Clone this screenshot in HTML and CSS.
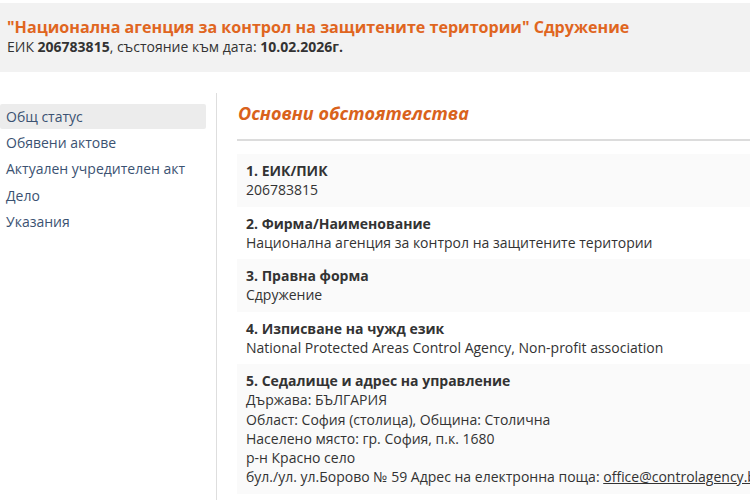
FILE: index.html
```html
<!DOCTYPE html>
<html lang="bg">
<head>
<meta charset="utf-8">
<link rel="stylesheet" href="styles.css">
</head>
<body>
<div class="page">
  <header class="head">
    <h1 class="title">"Национална агенция за контрол на защитените територии" Сдружение</h1>
    <div class="sub">ЕИК <b>206783815</b>, състояние към дата: <b>10.02.2026г.</b></div>
  </header>
  <div class="main">
    <nav class="nav">
      <a class="nav-item active">Общ статус</a>
      <a class="nav-item">Обявени актове</a>
      <a class="nav-item">Актуален учредителен акт</a>
      <a class="nav-item">Дело</a>
      <a class="nav-item">Указания</a>
    </nav>
    <section class="content">
      <h2 class="heading">Основни обстоятелства</h2>
      <div class="rule"></div>
      <div class="field alt">
        <div class="label">1. ЕИК/ПИК</div>
        <div class="value">206783815</div>
      </div>
      <div class="field">
        <div class="label">2. Фирма/Наименование</div>
        <div class="value">Национална агенция за контрол на защитените територии</div>
      </div>
      <div class="field alt">
        <div class="label">3. Правна форма</div>
        <div class="value">Сдружение</div>
      </div>
      <div class="field">
        <div class="label">4. Изписване на чужд език</div>
        <div class="value">National Protected Areas Control Agency, Non-profit association</div>
      </div>
      <div class="field alt">
        <div class="label">5. Седалище и адрес на управление</div>
        <div class="value">Държава: БЪЛГАРИЯ</div>
        <div class="value">Област: София (столица), Община: Столична</div>
        <div class="value">Населено място: гр. София, п.к. 1680</div>
        <div class="value">р-н Красно село</div>
        <div class="value">бул./ул. ул.Борово № 59 Адрес на електронна поща: <a class="mail">office@controlagency.bg</a></div>
      </div>
    </section>
  </div>
</div>
</body>
</html>
```

FILE: styles.css
```css
html, body {
  margin: 0;
  padding: 0;
  background: #fff;
  overflow: hidden;
}
body {
  font-family: "Open Sans", "Noto Sans", sans-serif;
  font-size: 14px;
  color: #333;
}
.page {
  padding-top: 3px;
  width: 800px;
}
.head {
  background: #f2f2f2;
  height: 69px;
  box-sizing: border-box;
  padding: 14px 7px 0;
}
.title {
  margin: 0;
  font-size: 16.1px;
  font-weight: 700;
  color: #e0661f;
  line-height: 20px;
  white-space: nowrap;
}
.sub {
  margin-top: 0;
  line-height: 20px;
  color: #333;
}
.sub b { font-weight: 700; }
.main {
  display: flex;
  margin-top: 21px;
}
.nav {
  width: 216px;
  flex: none;
  display: flex;
  flex-direction: column;
  padding-top: 11px;
}
.nav-item {
  display: block;
  width: 206px;
  box-sizing: border-box;
  padding: 0 6px;
  height: 26.25px;
  line-height: 26px;
  color: #3b5272;
  border-radius: 2px;
}
.nav-item.active {
  background: #ececec;
  height: 25px;
  line-height: 25px;
  margin-bottom: 1px;
}
.content {
  flex: 1;
  border-left: 1px solid #dedede;
  padding-left: 20px;
  min-height: 420px;
}
.heading {
  margin: 7px 0 0 1px;
  font-size: 18px;
  font-style: italic;
  font-weight: 700;
  color: #d9621c;
  line-height: 26px;
}
.rule {
  height: 2px;
  background: #dcdcdc;
  margin-top: 13px;
  margin-bottom: 13px;
}
.field {
  padding: 7px 9px;
  line-height: 19.25px;
  white-space: nowrap;
}
.field.alt {
  background: #fafafa;
}
.label {
  font-weight: 700;
  color: #333;
}
.value {
  color: #333;
}
.mail {
  color: #333;
  text-decoration: underline;
}
```
